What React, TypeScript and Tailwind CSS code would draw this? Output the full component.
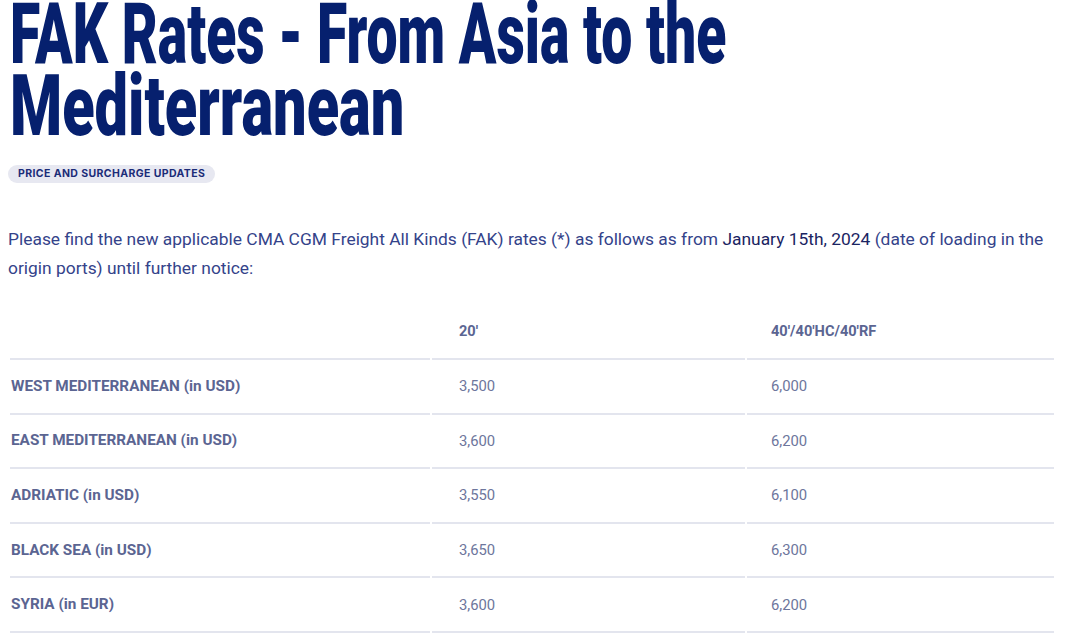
const rows = [
  { zone: "WEST MEDITERRANEAN (in USD)", a: "3,500", b: "6,000" },
  { zone: "EAST MEDITERRANEAN (in USD)", a: "3,600", b: "6,200" },
  { zone: "ADRIATIC (in USD)", a: "3,550", b: "6,100" },
  { zone: "BLACK SEA (in USD)", a: "3,650", b: "6,300" },
  { zone: "SYRIA (in EUR)", a: "3,600", b: "6,200" },
];

export default function App() {
  return (
    <main className="min-h-screen w-[1080px] overflow-hidden bg-white pl-[10px] pr-[26px] font-['Roboto',sans-serif]">
      <h1 className="-mt-[2px] font-['Roboto',sans-serif] text-[85px] font-black leading-[72px] text-[#06206e]">
        <span className="block origin-left scale-x-[0.65] whitespace-nowrap">FAK Rates - From Asia to the</span>
        <span className="block origin-left scale-x-[0.7] whitespace-nowrap">Mediterranean</span>
      </h1>
      <div className="mt-[18px]">
        <span className="inline-block -ml-[2px] rounded-full bg-[#e7e8f1] px-[10px] py-[2px] font-['Inter',sans-serif] text-[10.5px] font-bold leading-[14px] tracking-[0.4px] text-[#1b2c78]">
          PRICE AND SURCHARGE UPDATES
        </span>
      </div>
      <p className="mt-[41px] -ml-[2px] text-[17.4px] leading-[29px] text-[#34438a]">
        Please find the new applicable CMA CGM Freight All Kinds (FAK) rates (*) as follows as from{" "}
        <span className="text-[#1a2462]">January 15th, 2024</span> (date of loading in the origin ports) until further notice:
      </p>

      <div className="mt-[23px] grid grid-cols-[420px_313px_307px] gap-x-[2px] text-[#5b6592]">
        <div className="h-[54px] border-b-2 border-[#e3e5ee]" />
        <div className="flex h-[54px] items-center border-b-2 border-[#e3e5ee] pl-[27px] text-[14.6px] font-bold">20'</div>
        <div className="flex h-[54px] items-center border-b-2 border-[#e3e5ee] pl-[24px] text-[14.6px] font-bold">40'/40'HC/40'RF</div>
        {rows.map((r) => (
          <>
            <div key={r.zone + "z"} className="flex h-[54.6px] items-center border-b-2 border-[#e3e5ee] pl-[1px] text-[15.3px] font-bold">
              {r.zone}
            </div>
            <div key={r.zone + "a"} className="flex h-[54.6px] items-center border-b-2 border-[#e3e5ee] pl-[27px] text-[14.8px] text-[#6d769c]">
              {r.a}
            </div>
            <div key={r.zone + "b"} className="flex h-[54.6px] items-center border-b-2 border-[#e3e5ee] pl-[24px] text-[14.8px] text-[#6d769c]">
              {r.b}
            </div>
          </>
        ))}
      </div>
    </main>
  );
}
